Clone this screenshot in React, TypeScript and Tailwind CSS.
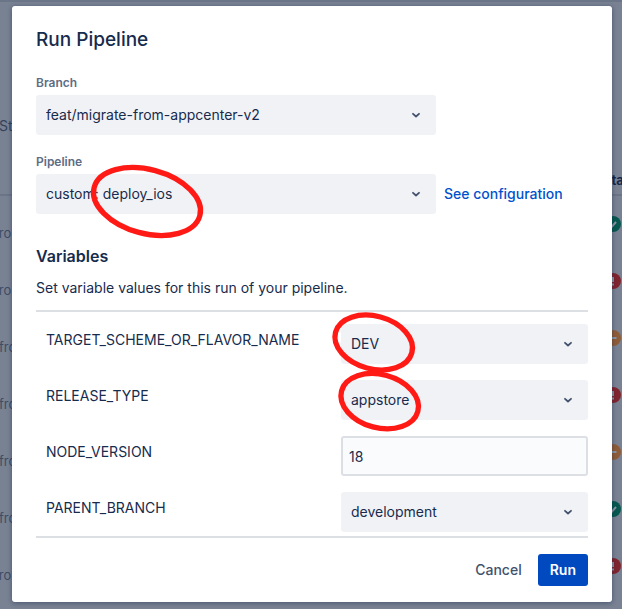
import { useState } from "react";
import type { ReactNode } from "react";

type Status = "passed" | "failed" | "stopped";

const runs: { status: Status; indent: string }[] = [
  { status: "passed", indent: "-ml-1.5" },
  { status: "failed", indent: "-ml-1.5" },
  { status: "stopped", indent: "-ml-px" },
  { status: "failed", indent: "-ml-px" },
  { status: "stopped", indent: "-ml-px" },
  { status: "passed", indent: "-ml-px" },
  { status: "failed", indent: "-ml-1.5" },
];

function StatusIcon({ status }: { status: Status }) {
  const fill = { passed: "#07584f", failed: "#80252f", stopped: "#8f5c38" }[status];
  const mark = {
    passed: "M5 8.5l2 2 4-4.5",
    failed: "M8 4v5M8 10.5v2",
    stopped: "M4.5 8h7",
  }[status];
  return (
    <svg className="block size-4" viewBox="0 0 16 16" aria-label={status} role="img">
      <circle cx="8" cy="8" r="8" fill={fill} />
      <path d={mark} stroke="#8c95a3" strokeWidth="2" fill="none" />
    </svg>
  );
}

function RunsPage() {
  return (
    <div className="col-start-1 row-start-1 overflow-hidden border-t-2 border-[#6b7588]">
      <p className="-ml-px mt-[114px] text-sm leading-5 text-[#34425c]">Status</p>
      <table className="mt-[34px] w-full table-fixed border-collapse text-[13px] leading-5">
        <thead>
          <tr className="border-b-2 border-[#6b7588]">
            <th className="h-[25px] p-0" />
            <th className="w-[19px] p-0 text-left align-top font-bold whitespace-nowrap text-[#14264a]">
              Status
            </th>
          </tr>
        </thead>
        <tbody>
          {runs.map((run, i) => (
            <tr key={i} className="h-[57px]">
              <td className="p-0 pt-[18px] text-[#3f4c66]">
                <div className={run.indent}>from</div>
              </td>
              <td className="p-0 pl-0.5">
                <StatusIcon status={run.status} />
              </td>
            </tr>
          ))}
        </tbody>
      </table>
    </div>
  );
}

function Select({ id, options }: { id: string; options: string[] }) {
  return (
    <div className="grid w-full items-center">
      <select
        id={id}
        className="col-start-1 row-start-1 h-10 w-full appearance-none rounded-[3px] bg-[#f1f2f6] px-2.5 text-sm text-[#172b4d]"
      >
        {options.map((o) => (
          <option key={o}>{o}</option>
        ))}
      </select>
      <svg
        className="pointer-events-none col-start-1 row-start-1 mr-4 h-2 w-2 justify-self-end"
        viewBox="0 0 8 8"
        aria-hidden="true"
      >
        <path
          d="M1 2.8L4 5.5L7 2.8"
          fill="none"
          stroke="#42526e"
          strokeWidth="1.8"
          strokeLinecap="round"
          strokeLinejoin="round"
        />
      </svg>
    </div>
  );
}

function Variable({ id, name, children }: { id: string; name: string; children: ReactNode }) {
  return (
    <div className="flex items-start justify-between pl-2.5">
      <label htmlFor={id} className="pt-1.5 text-sm leading-5">
        {name}
      </label>
      <div className="w-[247px]">{children}</div>
    </div>
  );
}

function Highlights() {
  return (
    <svg className="pointer-events-none absolute top-0 left-0 h-full w-full" aria-hidden="true">
      <g fill="none" stroke="#ff1a16" strokeWidth="5.3">
        <ellipse cx="135" cy="195.5" rx="54.7" ry="32" transform="rotate(15 135 195.5)" />
        <ellipse cx="361.7" cy="336.5" rx="39.5" ry="26.4" transform="rotate(15 361.7 336.5)" />
        <ellipse cx="367.7" cy="395.2" rx="39.5" ry="26.6" transform="rotate(15 367.7 395.2)" />
      </g>
    </svg>
  );
}

export default function App() {
  const [nodeVersion, setNodeVersion] = useState("18");
  const fieldLabel = "block text-xs leading-5 font-semibold text-[#5e6c84]";

  return (
    <div className="grid h-screen grid-cols-1 grid-rows-1 overflow-hidden bg-[#798293] font-[Inter,sans-serif] text-[#172b4d]">
      <RunsPage />
      <div className="z-10 col-start-1 row-start-1 pt-1.5 pr-2.5 pl-3">
        <form
          role="dialog"
          aria-labelledby="title"
          onSubmit={(e) => e.preventDefault()}
          className="relative rounded-[3px] bg-white px-6 pt-5 pb-4 shadow-[0_1px_5px_rgba(9,30,66,0.45)]"
        >
          <h1 id="title" className="text-[19px] leading-7 font-medium">
            Run Pipeline
          </h1>

          <div className="mt-[19px] w-[400px]">
            <label htmlFor="branch" className={fieldLabel}>
              Branch
            </label>
            <div className="mt-0.5">
              <Select id="branch" options={["feat/migrate-from-appcenter-v2"]} />
            </div>
          </div>

          <div className="mt-[17px]">
            <label htmlFor="pipeline" className={fieldLabel}>
              Pipeline
            </label>
            <div className="mt-0.5 flex items-center gap-2">
              <div className="w-[400px]">
                <Select id="pipeline" options={["custom: deploy_ios"]} />
              </div>
              <a href="#configuration" className="text-sm font-medium text-[#0052cc]">
                See configuration
              </a>
            </div>
          </div>

          <h2 className="mt-[30px] text-base leading-6 font-semibold">Variables</h2>
          <p className="mt-2.5 text-sm leading-5">Set variable values for this run of your pipeline.</p>

          <div className="mt-3 flex flex-col gap-4 border-y-2 border-[#dcdfe4] pt-3 pb-1">
            <Variable id="scheme" name="TARGET_SCHEME_OR_FLAVOR_NAME">
              <Select id="scheme" options={["DEV"]} />
            </Variable>
            <Variable id="release" name="RELEASE_TYPE">
              <Select id="release" options={["appstore"]} />
            </Variable>
            <Variable id="node" name="NODE_VERSION">
              <input
                id="node"
                value={nodeVersion}
                onChange={(e) => setNodeVersion(e.target.value)}
                className="block h-10 w-full rounded-[3px] border-2 border-[#dcdfe4] bg-[#fafbfc] px-1.5 text-sm"
              />
            </Variable>
            <Variable id="parent" name="PARENT_BRANCH">
              <Select id="parent" options={["development"]} />
            </Variable>
          </div>

          <div className="mt-4 flex justify-end gap-1">
            <button type="button" className="h-8 rounded-[3px] px-3 text-sm font-medium text-[#42526e]">
              Cancel
            </button>
            <button type="submit" className="h-8 rounded-[3px] bg-[#0049bf] px-3 text-sm font-semibold text-white">
              Run
            </button>
          </div>

          <Highlights />
        </form>
      </div>
    </div>
  );
}
